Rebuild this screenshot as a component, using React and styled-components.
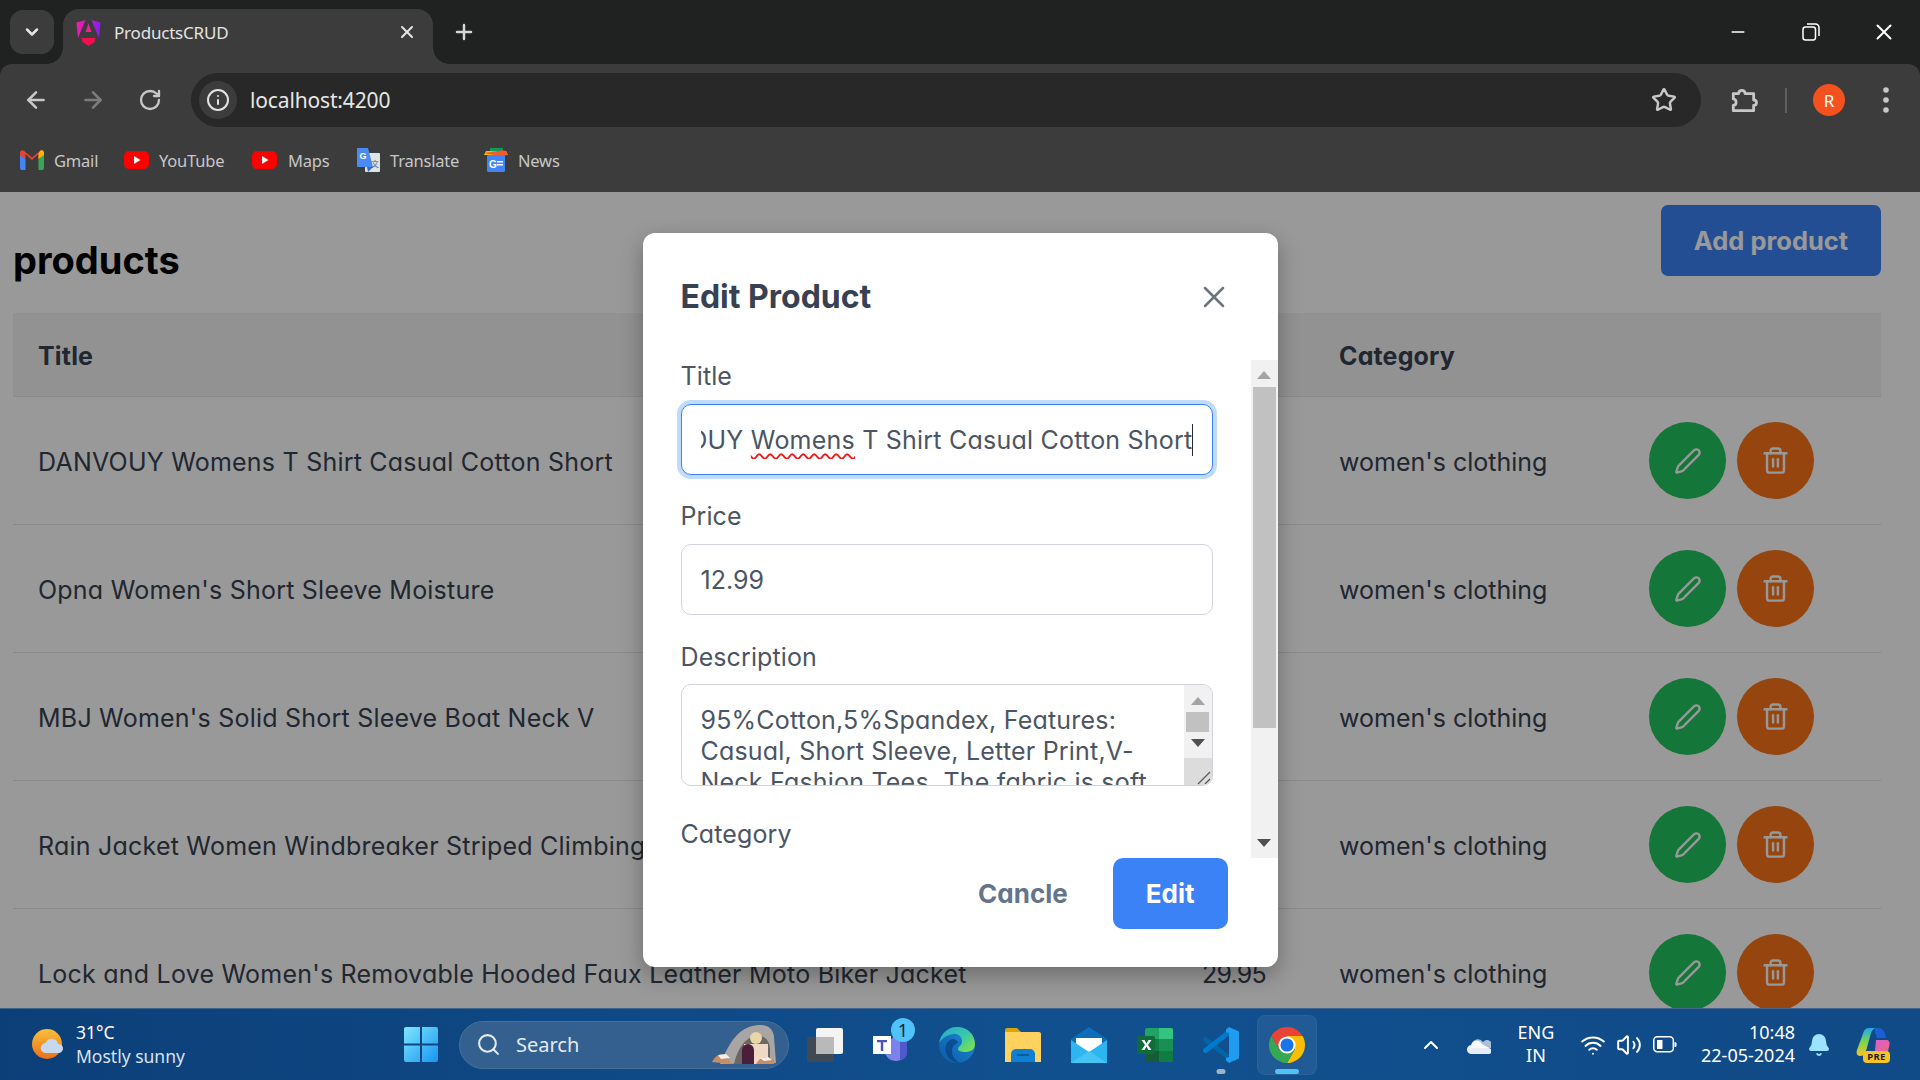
import React from "react";
import styled, { createGlobalStyle } from "styled-components";
import { ChevronDown, ChevronUp, X, Plus, ArrowLeft, ArrowRight, RotateCw, Info, Star, Minus, Pen, Trash2, Search as SearchGlyph, Wifi, Volume2, Bell } from "lucide-react";

const Global = createGlobalStyle`
  html, body { margin: 0; padding: 0; height: 100%; overflow: hidden; }
  #root { height: 100%; }
  * { box-sizing: border-box; }
  body { font-family: Inter, "Liberation Sans", sans-serif; font-feature-settings: "cv11"; }
`;

const Shell = styled.div`display:flex;flex-direction:column;width:1920px;height:1080px;overflow:hidden;background:#202221;`;

/* ---------- browser chrome ---------- */
const TabStrip = styled.div`display:flex;align-items:flex-start;height:64px;padding:9px 0 0 10px;flex:none;font-family:"Noto Sans",sans-serif;`;
const TabMenu = styled.div`width:44px;height:44px;margin-top:1px;border-radius:13px;background:#3c3c3c;color:#e3e3e3;display:flex;align-items:center;justify-content:center;`;
const Tab = styled.div`
  position:relative;width:370px;height:55px;margin-left:9px;background:#3c3c3c;border-radius:16px 16px 0 0;display:flex;align-items:center;padding:0 16px 9px 13px;color:#e3e3e3;font-size:17px;
  &::before,&::after{content:"";position:absolute;bottom:0;width:16px;height:16px;}
  &::before{left:-16px;background:radial-gradient(circle at 0 0,transparent 15.5px,#3c3c3c 16px);}
  &::after{right:-16px;background:radial-gradient(circle at 100% 0,transparent 15.5px,#3c3c3c 16px);}
`;
const TabTitle = styled.span`margin-left:13px;flex:1;letter-spacing:-.2px;`;
const NewTab = styled.div`width:40px;height:40px;margin:3px 0 0 11px;color:#d5d5d5;display:flex;align-items:center;justify-content:center;`;
const WindowControls = styled.div`margin-left:auto;display:flex;color:#fff;`;
const WinBtn = styled.div`width:73px;height:46px;display:flex;align-items:center;justify-content:center;`;
const Toolbar = styled.div`flex:none;height:72px;background:#3c3c3c;border-radius:12px 12px 0 0;display:flex;align-items:center;padding:0 24px 0 7px;color:#c8c8c8;font-family:"Noto Sans",sans-serif;`;
const NavBtn = styled.div`width:57px;display:flex;justify-content:center;color:${p=>p.$dim?"#7c7c7c":"#c8c8c8"};`;
const Omnibox = styled.div`flex:none;width:1510px;height:54px;margin-left:13px;border-radius:27px;background:#282828;display:flex;align-items:center;padding:0 24px 0 8px;`;
const SiteInfo = styled.div`width:38px;height:38px;border-radius:50%;background:#3c3c3c;color:#e3e3e3;display:flex;align-items:center;justify-content:center;`;
const Url = styled.span`margin-left:13px;font-size:21px;color:#e6e6e6;flex:1;letter-spacing:-.15px;`;
const ExtSlot = styled.div`margin-left:25px;width:36px;display:flex;justify-content:center;`;
const VDivider = styled.div`margin-left:23px;width:2px;height:25px;background:#5e5e5e;`;
const Avatar = styled.div`margin-left:26px;width:32px;height:32px;border-radius:50%;background:#f4511e;color:#fff;font:400 17px "Noto Sans",sans-serif;display:flex;align-items:center;justify-content:center;`;
const DotsSlot = styled.div`margin-left:31px;width:20px;display:flex;justify-content:center;`;
const BookmarkBar = styled.div`flex:none;height:56px;background:#3c3c3c;padding:0 0 8px 20px;display:flex;align-items:center;font-family:"Noto Sans",sans-serif;`;
const Bookmark = styled.div`display:flex;align-items:center;width:${p=>p.$w}px;color:#c7c7c7;font-size:16.5px;letter-spacing:-.2px;svg{flex:none;margin-right:${p=>p.$gap||10}px;}`;

/* ---------- page ---------- */
const Page = styled.main`flex:1;min-height:0;position:relative;overflow:hidden;background:#fff;padding:0 39px 0 13px;`;
const PageHead = styled.header`height:121px;padding-top:13px;display:flex;justify-content:space-between;align-items:flex-start;`;
const Heading = styled.h1`margin:34px 0 0;font-size:38px;line-height:42px;font-weight:700;color:#000;`;
const AddBtn = styled.button`width:220px;height:71px;border:0;border-radius:7px;background:#3b82f6;color:#fff;font:700 25.5px Inter,sans-serif;font-feature-settings:normal;`;
const TableRow = styled.div`display:grid;grid-template-columns:1165px 136px 310px 1fr;align-items:center;height:${p=>p.$head?84:128}px;background:${p=>p.$head?"#f3f4f6":"#fff"};border-bottom:1px solid #e5e7eb;font-size:25px;font-weight:${p=>p.$head?700:400};letter-spacing:${p=>p.$head?".15px":"0"};color:#374151;`;
const Cell = styled.div`padding:2px 0 0 25px;white-space:nowrap;`;
const TitleCell = styled(Cell)`letter-spacing:.22px;`;
const PriceCell = styled(Cell)`letter-spacing:-.8px;padding-left:24px;`;
const Actions = styled.div`padding-left:25px;display:flex;gap:11px;`;
const RoundBtn = styled.button`width:77px;height:77px;border:0;border-radius:50%;background:${p=>p.$kind==="edit"?"#22c55e":"#f97316"};color:#fff;display:flex;align-items:center;justify-content:center;padding:0;`;

/* ---------- modal ---------- */
const Overlay = styled.div`position:absolute;inset:0;background:rgba(0,0,0,.4);display:flex;align-items:center;justify-content:center;`;
const Modal = styled.div`width:635px;height:734px;background:#fff;border-radius:12px;box-shadow:0 8px 22px rgba(0,0,0,.3);display:flex;flex-direction:column;overflow:hidden;`;
const ModalHead = styled.div`flex:none;height:127px;padding:0 46px 0 38px;display:flex;align-items:center;justify-content:space-between;color:#6b7280;`;
const ModalTitle = styled.h2`margin:0;font-size:32px;font-weight:700;color:#374151;`;
const ScrollArea = styled.div`flex:none;height:498px;display:flex;`;
const Form = styled.form`flex:1;overflow:hidden;padding-left:38px;`;
const Field = styled.div`margin-bottom:${p=>p.$mb||25}px;width:532px;`;
const Label = styled.label`display:block;height:32px;line-height:32px;margin-bottom:${p=>p.$mb||12}px;font-size:25px;letter-spacing:.1px;color:#4b5563;`;
const TextInput = styled.input`display:block;width:532px;height:71px;border:1px solid #d1d5db;border-radius:10px;padding:0 19px;font:400 25px Inter,sans-serif;font-feature-settings:"cv11";color:#4b5563;outline:0;background:#fff;`;
const FocusedInput = styled.div`width:532px;height:71px;border:1px solid #3b82f6;border-radius:10px;box-shadow:0 0 0 4px #bfdbfe;padding:0 19px;display:flex;align-items:center;font-size:25px;letter-spacing:.22px;color:#4b5563;background:#fff;`;
const InputClip = styled.div`width:100%;overflow:hidden;display:flex;justify-content:flex-end;white-space:nowrap;height:38px;line-height:38px;`;
const Misspelt = styled.span`text-decoration:underline wavy #ee1c1c 1.5px;text-underline-offset:4px;text-decoration-skip-ink:none;`;
const Caret = styled.span`flex:none;width:1px;height:32px;margin:3px 0 0 -1px;background:#1f2937;`;
const TextBox = styled.div`width:532px;height:102px;border:1px solid #d1d5db;border-radius:10px;overflow:hidden;display:flex;background:#fff;`;
const TextArea = styled.textarea`flex:1;border:0;outline:0;resize:none;overflow:hidden;padding:20px 0 0 19px;font:400 25px/31px Inter,sans-serif;letter-spacing:.2px;font-feature-settings:"cv11";color:#4b5563;background:transparent;`;
const InnerBar = styled.div`flex:none;width:28px;display:flex;flex-direction:column;`;
const InnerTrack = styled.div`height:73px;background:#f1f1f1;display:flex;flex-direction:column;align-items:center;position:relative;`;
const InnerThumb = styled.div`position:absolute;top:27px;left:2px;width:23px;height:20px;background:#c1c1c1;`;
const Arrow = styled.i`display:block;width:0;height:0;border-left:7px solid transparent;border-right:7px solid transparent;${p=>p.$up?`border-bottom:8px solid ${p.$c};`:`border-top:8px solid ${p.$c};`}`;
const Resizer = styled.div`flex:1;background:#dcdcdc;display:flex;align-items:flex-end;justify-content:flex-end;`;
const MainTrack = styled.div`flex:none;width:27px;background:#f1f1f1;position:relative;display:flex;flex-direction:column;align-items:center;justify-content:space-between;padding:11px 0 11px;`;
const MainThumb = styled.div`position:absolute;top:27px;left:2px;width:23px;height:341px;background:#c1c1c1;`;
const ModalFoot = styled.div`flex:1;display:flex;justify-content:flex-end;align-items:flex-start;gap:12px;padding-right:50px;`;
const FootBtn = styled.button`height:71px;padding:0 33px;border:0;border-radius:10px;background:${p=>p.$primary?"#3b82f6":"transparent"};color:${p=>p.$primary?"#fff":"#64748b"};font:700 26px Inter,sans-serif;font-feature-settings:"cv11";`;

/* ---------- taskbar ---------- */
const Taskbar = styled.footer`flex:none;height:72px;border-top:1px solid #41648d;background:linear-gradient(90deg,#0c3f78,#11508f 55%,#104a87);display:grid;grid-template-columns:388px auto 1fr;align-items:center;color:#fff;font-family:"Noto Sans",sans-serif;`;
const Weather = styled.div`display:flex;align-items:center;padding-left:32px;`;
const WeatherText = styled.div`margin-left:12px;font-size:17.5px;line-height:24px;margin-top:-2px;small{display:block;font-size:17.5px;color:#d9e3ef;}`;
const TaskIcons = styled.div`display:flex;align-items:center;`;
const Slot = styled.div`position:relative;width:66px;height:60px;display:flex;align-items:center;justify-content:center;border-radius:8px;${p=>p.$active&&"background:rgba(255,255,255,.07);box-shadow:inset 0 0 0 1px rgba(255,255,255,.05);width:60px;margin:0 3px;"}`;
const Pip = styled.i`position:absolute;bottom:1px;left:50%;transform:translateX(-50%);height:5px;border-radius:3px;width:${p=>p.$w}px;background:${p=>p.$c};`;
const TeamsBadge = styled.span`position:absolute;right:9px;top:3px;width:24px;height:24px;border-radius:50%;background:#4fc3f7;color:#10233b;font-size:18px;display:flex;align-items:center;justify-content:center;`;
const SearchBox = styled.div`width:330px;height:48px;margin:0 3px 0 5px;border-radius:24px;background:#33608f;border:1px solid #47719c;display:flex;align-items:center;padding:0 10px 0 16px;color:#e4eaf1;font-size:20px;span{margin-left:15px;flex:1;}`;
const Tray = styled.div`display:flex;align-items:center;justify-content:flex-end;padding-right:30px;`;
const TrayItem = styled.div`width:${p=>p.$w}px;margin-left:${p=>p.$ml||0}px;display:flex;justify-content:center;`;
const Stack = styled.div`text-align:${p=>p.$align};font-size:18px;line-height:23px;margin-top:-2px;white-space:nowrap;margin-left:${p=>p.$ml||0}px;width:${p=>p.$w}px;`;
const CopilotWrap = styled.div`position:relative;width:34px;height:34px;margin-left:20px;`;
const PreBadge = styled.span`position:absolute;left:7px;bottom:-1px;width:27px;height:12px;border-radius:4px;background:#f7c325;color:#222;font:700 9.5px/12px "Noto Sans",sans-serif;text-align:center;letter-spacing:.4px;`;

/* ---------- drawings ---------- */
const AngularIcon = () => (
  <svg width="25" height="27" viewBox="0 0 25 27">
    <defs><linearGradient id="ng" x1="0" y1="0" x2="1" y2="0"><stop offset="0" stopColor="#f01fa8"/><stop offset="1" stopColor="#8a1cf0"/></linearGradient></defs>
    <path d="M9.5 1 0.5 3.5 2 19 9.5 1Z M15.5 1 24.5 3.5 23 19 15.5 1Z" fill="url(#ng)"/>
    <path d="M12.5 4.5 15.5 13H9.5Z" fill="#f02090"/>
    <path d="M5.5 19H19.5L18.5 23 12.5 27 6.5 23Z" fill="#f0104f"/>
  </svg>
);
const GmailIcon = () => (
  <svg width="24" height="20" viewBox="0 0 24 20">
    <path d="M0 4v14a2 2 0 0 0 2 2h3.5V9Z" fill="#4285f4"/><path d="M24 4v14a2 2 0 0 1-2 2h-3.5V9Z" fill="#34a853"/>
    <path d="M0 2.5C0 .5 2.3-.6 3.8.7L12 7.5 20.200.7C21.700-.6 24 .5 24 2.500V5l-5.500 4V4L12 10 5.500 4v5L0 5Z" fill="#ea4335"/>
    <path d="M18.500 4v5L24 5V2.500C24 .5 21.700-.6 20.200.7Z" fill="#fbbc04"/>
  </svg>
);
const YtIcon = () => (
  <svg width="25" height="18" viewBox="0 0 25 18"><rect width="25" height="18" rx="5" fill="#f00"/><path d="M10 5v8l6.500-4Z" fill="#fff"/></svg>
);
const TranslateIcon = () => (
  <svg width="24" height="24" viewBox="0 0 24 24">
    <rect x="9" y="5" width="15" height="19" rx="1" fill="#dde3e8"/>
    <path d="M1 0h11l5 19H2a1 1 0 0 1-1-1Z" fill="#4a8af4"/>
    <path d="M11 19h6l-5 5Z" fill="#3367c7"/>
    <text x="3.500" y="11" fontSize="9" fontWeight="700" fill="#fff" fontFamily="Liberation Sans">G</text>
    <text x="15" y="19" fontSize="8" fill="#5f6368" fontFamily="Noto Sans CJK SC">文</text>
  </svg>
);
const NewsIcon = () => (
  <svg width="24" height="24" viewBox="0 0 24 24">
    <path d="M6 0h13v6H6Z" fill="#0c9d58"/><path d="M2 3h20l2 4H0Z" fill="#fbbc04"/><path d="M0 5l20-3 4 4-4 3Z" fill="#ea4335" opacity=".8"/>
    <rect x="3" y="7" width="18" height="17" rx="1.500" fill="#4285f4"/>
    <text x="5" y="19.500" fontSize="10" fontWeight="700" fill="#fff" fontFamily="Liberation Sans">G</text>
    <path d="M13 13h6v1.500h-6Zm0 3h6v1.500h-6Z" fill="#fff"/>
  </svg>
);
const RestoreIcon = () => (
  <svg width="18" height="18" viewBox="0 0 18 18" fill="none" stroke="#fff" strokeWidth="1.500"><rect x="1" y="4" width="12.500" height="13" rx="2.500"/><path d="M5 1h8.500A3.500 3.500 0 0 1 17 4.500V13"/></svg>
);
const PuzzleIcon = () => (
  <svg width="30" height="30" viewBox="0 0 28 28" fill="none" stroke="#c8c8c8" strokeWidth="2.600" strokeLinejoin="round">
    <path d="M3 9h5c0-4 6-4 6 0h8v6c3.500 0 3.500 5 0 5v5H3v-5c3.500 0 3.500-6 0-6Z" transform="translate(1 -1)"/>
  </svg>
);
const MenuDots = () => (
  <svg width="8" height="28" viewBox="0 0 8 28" fill="#c8c8c8"><circle cx="4" cy="4" r="2.800"/><circle cx="4" cy="14" r="2.800"/><circle cx="4" cy="24" r="2.800"/></svg>
);
const WeatherIcon = () => (
  <svg width="32" height="32" viewBox="0 0 32 32">
    <defs><linearGradient id="sun" x1="0" y1="0" x2="0" y2="1"><stop offset="0" stopColor="#fbbf3a"/><stop offset="1" stopColor="#ec6f1a"/></linearGradient></defs>
    <circle cx="15" cy="15" r="15" fill="url(#sun)"/>
    <path d="M14 24a5 5 0 0 1-.5-10 6.500 6.500 0 0 1 12.500 1 4.500 4.500 0 0 1 1 9Z" fill="#c6d9ee"/>
  </svg>
);
const WinLogo = () => (
  <svg width="34" height="35" viewBox="0 0 34 35">
    <defs><linearGradient id="wn" x1="0" y1="0" x2="1" y2="1"><stop offset="0" stopColor="#7fe6fb"/><stop offset="1" stopColor="#1696f3"/></linearGradient></defs>
    <path d="M0 2a2 2 0 0 1 2-2h14v16.500H0ZM18 0h14a2 2 0 0 1 2 2v14.500H18ZM0 18.500h16V35H2a2 2 0 0 1-2-2ZM18 18.500h16V33a2 2 0 0 1-2 2H18Z" fill="url(#wn)"/>
  </svg>
);
const CaveIcon = () => (
  <svg width="66" height="42" viewBox="0 0 66 42">
    <path d="M8 40C18 18 26 2 48 1c8 0 13 4 14 12l2 26Z" fill="#a9a5a5"/>
    <path d="M22 40c3-14 12-30 26-28 7 1 10 7 10 14v14Z" fill="#6b6763"/>
    <rect x="32" y="20" width="24" height="20" fill="#f0d9c4"/>
    <path d="M30 40V26a6 6 0 0 1 12 0v14Z" fill="#4b1f3a"/>
    <circle cx="44" cy="14" r="6" fill="#e8d7a8"/>
    <path d="M0 38c4-8 10-9 14-6l6 8Z M44 40c4-8 12-8 18-4v4Z" fill="#c88d62"/>
    <path d="M6 31l8-1 4 4-9 1ZM48 34l8-1 4 3-8 1Z" fill="#f4efe9"/>
  </svg>
);
const TaskViewIcon = () => (
  <svg width="36" height="34" viewBox="0 0 36 34">
    <rect x="9" width="27" height="26" rx="2" fill="#f4f4f4"/>
    <rect y="9" width="27" height="25" rx="2" fill="#4a4a4a" opacity=".85"/>
    <rect x="9" y="9" width="18" height="17" fill="#b9b9b9"/>
  </svg>
);
const TeamsIcon = () => (
  <svg width="36" height="36" viewBox="0 0 36 36">
    <circle cx="25" cy="13" r="6" fill="#7b83eb"/>
    <path d="M12 12h22v12a10 10 0 0 1-10 10h-2a10 10 0 0 1-10-10Z" fill="#7b83eb"/>
    <path d="M27 14h7v12a7 7 0 0 1-7 7Z" fill="#5059c9"/>
    <rect y="9" width="18" height="18" fill="#fff"/>
    <path d="M4 13h10v2.200h-3.800V24H7.800v-8.800H4Z" fill="#4b53bc"/>
  </svg>
);
const EdgeIcon = () => (
  <svg width="36" height="36" viewBox="0 0 36 36">
    <defs>
      <linearGradient id="eg1" x1="0" y1="1" x2="1" y2="0"><stop offset="0" stopColor="#0c59a4"/><stop offset="1" stopColor="#1c8fdc"/></linearGradient>
      <linearGradient id="eg2" x1="0" y1="0" x2="1" y2=".8"><stop offset="0" stopColor="#2aa7d8"/><stop offset=".6" stopColor="#38c8a8"/><stop offset="1" stopColor="#7ee04f"/></linearGradient>
    </defs>
    <circle cx="18" cy="18" r="18" fill="url(#eg1)"/>
    <path d="M0 16C2 6 10 0 18 0c10 0 18 7 18 17 0 6-5 8-10 8-4 0-7-1-7-3 0-3 4-3 4-8 0-5-5-8-9-7C8 8 3 11 0 16Z" fill="url(#eg2)"/>
    <path d="M14 12c-6 1-9 7-7 14 2 6 8 10 14 10-4-2-8-6-8-12 0-5 3-7 6-8-1-3-3-4-5-4Z" fill="#0a3f7e" opacity=".7"/>
  </svg>
);
const FolderIcon = () => (
  <svg width="36" height="34" viewBox="0 0 36 34">
    <path d="M0 2a2 2 0 0 1 2-2h10l4 4H0Z" fill="#dba40c"/>
    <path d="M0 4h34a2 2 0 0 1 2 2v28H0Z" fill="#ffd25f"/>
    <path d="M6 34V26a5 5 0 0 1 5-5h14a5 5 0 0 1 5 5v8Z" fill="#0f7fd1"/>
    <rect x="12" y="26" width="12" height="2" fill="#0a5a9c"/>
  </svg>
);
const MailIcon = () => (
  <svg width="36" height="36" viewBox="0 0 36 36">
    <path d="M0 12 18 0l18 12v24H0Z" fill="#0f6cbd"/>
    <path d="M5 11h26v8L18 26 5 19Z" fill="#fff"/>
    <path d="M0 13l18 12 18-12v23H0Z" fill="#2db5f0"/>
    <path d="M0 36 18 24l18 12Z" fill="#55d0f8" opacity=".6"/>
  </svg>
);
const ExcelIcon = () => (
  <svg width="36" height="34" viewBox="0 0 36 34">
    <path d="M8 2a2 2 0 0 1 2-2h24a2 2 0 0 1 2 2v9H8Z" fill="#21a366"/><path d="M22 0h12a2 2 0 0 1 2 2v9H22Z" fill="#33c481"/>
    <path d="M8 11h14v12H8Z" fill="#107c41"/><path d="M22 11h14v12H22Z" fill="#1a8f55"/>
    <path d="M8 23h28v9a2 2 0 0 1-2 2H10a2 2 0 0 1-2-2Z" fill="#185c37"/><rect x="22" y="23" width="14" height="11" fill="#107c41"/>
    <rect y="8" width="18" height="18" rx="1.500" fill="#0f6b3a"/>
    <path d="M4.500 12h3l2 3.500L11.500 12h3l-3.500 5 3.500 5h-3l-2-3.500L7.500 22h-3L8 17Z" fill="#fff"/>
  </svg>
);
const VsCodeIcon = () => (
  <svg width="36" height="36" viewBox="0 0 36 36">
    <path d="M2.500 12.500 25 30" stroke="#0065a9" strokeWidth="5" strokeLinecap="round"/>
    <path d="M2.500 23.500 25 6" stroke="#007acc" strokeWidth="5" strokeLinecap="round"/>
    <path d="M26 0l10 4.500v27L26 36l-3-2.500V31l3-1V6l-3-1V2.500Z" fill="#1f9cf0"/>
  </svg>
);
const ChromeIcon = () => (
  <svg width="36" height="36" viewBox="2 2 44 44">
    <path d="M4.950 13A22 22 0 0 1 43.050 13H24L14.500 29.500Z" fill="#ea4335"/>
    <path d="M43.050 13A22 22 0 0 1 24 46L33.500 29.500 24 13Z" fill="#fbbc04"/>
    <path d="M24 46A22 22 0 0 1 4.950 13L14.500 29.500H33.500Z" fill="#34a853"/>
    <circle cx="24" cy="24" r="10.500" fill="#fff"/><circle cx="24" cy="24" r="8" fill="#1a73e8"/>
  </svg>
);
const CloudIcon = () => (
  <svg width="24" height="18" viewBox="0 0 24 18">
    <path d="M5 9a6 6 0 0 1 11-3 5 5 0 0 1 8 6H3Z" fill="#a9c0da"/>
    <path d="M5 18a4.500 4.500 0 0 1-1-9 6 6 0 0 1 11-1l9 5a3 3 0 0 1-2 5Z" fill="#fff" opacity=".9"/>
  </svg>
);
const BatteryIcon = () => (
  <svg width="24" height="18" viewBox="0 0 24 18" fill="none">
    <rect x=".8" y=".8" width="19.500" height="15" rx="3.500" stroke="#fff" strokeWidth="1.500"/>
    <rect x="4" y="4" width="5.500" height="9" fill="#fff"/>
    <path d="M21.500 6h.5a1.500 1.500 0 0 1 1.500 1.500v2a1.500 1.500 0 0 1-1.500 1.500h-.5Z" fill="#fff"/>
  </svg>
);
const CopilotIcon = () => (
  <svg width="34" height="34" viewBox="0 0 34 34">
    <defs>
      <linearGradient id="cp1" x1="0" y1="0" x2="0" y2="1"><stop offset="0" stopColor="#1fa8f1"/><stop offset=".5" stopColor="#7dd34f"/><stop offset="1" stopColor="#f3c623"/></linearGradient>
      <linearGradient id="cp2" x1="0" y1="0" x2="1" y2="1"><stop offset="0" stopColor="#d35ee0"/><stop offset="1" stopColor="#f4696b"/></linearGradient>
    </defs>
    <path d="M8 3c1-2 3-3 5-3h8c-3 0-5 2-6 5l-5 18c-1 3-3 5-6 5-3 0-4-3-3-6Z" fill="url(#cp1)"/>
    <path d="M20 0h3c3 0 5 3 6 6l1 4H21l-2-6c-.4-1.500 0-3 1-4Z" fill="#1b5fd6"/>
    <path d="M20 12h10c3 0 4 2 3.500 5l-2 8c-.8 2-2 3-4 3H14c3 0 4-2 5-5Z" fill="url(#cp2)"/>
  </svg>
);
const Grip = () => (
  <svg width="16" height="16" viewBox="0 0 16 16" stroke="#555" strokeWidth="1.200"><path d="M2 15 14 3M9 15l5-5"/></svg>
);

const rows = [
  ["DANVOUY Womens T Shirt Casual Cotton Short", "12.99"],
  ["Opna Women's Short Sleeve Moisture", "7.95"],
  ["MBJ Women's Solid Short Sleeve Boat Neck V", "9.85"],
  ["Rain Jacket Women Windbreaker Striped Climbing Raincoats", "39.99"],
  ["Lock and Love Women's Removable Hooded Faux Leather Moto Biker Jacket", "29.95"],
];
const description = "95%Cotton,5%Spandex, Features: Casual, Short Sleeve, Letter Print,V-Neck Fashion Tees, The fabric is soft and has some stretch.";

export default function App() {
  return (
    <Shell>
      <Global />
      <TabStrip>
        <TabMenu><ChevronDown size={20} strokeWidth={3} /></TabMenu>
        <Tab>
          <AngularIcon />
          <TabTitle>ProductsCRUD</TabTitle>
          <X size={20} strokeWidth={2.5} />
        </Tab>
        <NewTab><Plus size={24} strokeWidth={2.500} /></NewTab>
        <WindowControls>
          <WinBtn><Minus size={20} strokeWidth={1.800} /></WinBtn>
          <WinBtn><RestoreIcon /></WinBtn>
          <WinBtn><X size={26} strokeWidth={1.800} /></WinBtn>
        </WindowControls>
      </TabStrip>
      <Toolbar>
        <NavBtn><ArrowLeft size={26} strokeWidth={2.300} /></NavBtn>
        <NavBtn $dim><ArrowRight size={26} strokeWidth={2.300} /></NavBtn>
        <NavBtn><RotateCw size={24} strokeWidth={2.300} /></NavBtn>
        <Omnibox>
          <SiteInfo><Info size={24} strokeWidth={2} /></SiteInfo>
          <Url>localhost:4200</Url>
          <Star size={26} strokeWidth={2.300} />
        </Omnibox>
        <ExtSlot><PuzzleIcon /></ExtSlot>
        <VDivider />
        <Avatar>R</Avatar>
        <DotsSlot><MenuDots /></DotsSlot>
      </Toolbar>
      <BookmarkBar>
        <Bookmark $w={104}><GmailIcon />Gmail</Bookmark>
        <Bookmark $w={128}><YtIcon />YouTube</Bookmark>
        <Bookmark $w={104} $gap={11}><YtIcon />Maps</Bookmark>
        <Bookmark $w={128}><TranslateIcon />Translate</Bookmark>
        <Bookmark $w={90}><NewsIcon />News</Bookmark>
      </BookmarkBar>

      <Page>
        <PageHead>
          <Heading>products</Heading>
          <AddBtn>Add product</AddBtn>
        </PageHead>
        <TableRow $head>
          <Cell>Title</Cell>
          <Cell>Price</Cell>
          <Cell>Category</Cell>
          <Cell />
        </TableRow>
        {rows.map(([title, price]) => (
          <TableRow key={title}>
            <TitleCell>{title}</TitleCell>
            <PriceCell>{price}</PriceCell>
            <Cell>women's clothing</Cell>
            <Actions>
              <RoundBtn $kind="edit"><Pen size={28} strokeWidth={2} /></RoundBtn>
              <RoundBtn $kind="delete"><Trash2 size={29} strokeWidth={2} /></RoundBtn>
            </Actions>
          </TableRow>
        ))}
        <Overlay>
          <Modal>
            <ModalHead>
              <ModalTitle>Edit Product</ModalTitle>
              <X size={36} strokeWidth={1.700} />
            </ModalHead>
            <ScrollArea>
              <Form>
                <Field>
                  <Label>Title</Label>
                  <FocusedInput>
                    <InputClip>
                      <span>DANVOUY <Misspelt>Womens</Misspelt> T Shirt Casual Cotton Short</span>
                      <Caret />
                    </InputClip>
                  </FocusedInput>
                </Field>
                <Field $mb={26}>
                  <Label>Price</Label>
                  <TextInput readOnly value="12.99" />
                </Field>
                <Field $mb={32}>
                  <Label $mb={11}>Description</Label>
                  <TextBox>
                    <TextArea readOnly value={description} />
                    <InnerBar>
                      <InnerTrack>
                        <Arrow $up $c="#a3a3a3" style={{ marginTop: 12 }} />
                        <InnerThumb />
                        <Arrow $c="#505050" style={{ marginTop: 34 }} />
                      </InnerTrack>
                      <Resizer><Grip /></Resizer>
                    </InnerBar>
                  </TextBox>
                </Field>
                <Field>
                  <Label>Category</Label>
                  <TextInput readOnly value="women's clothing" />
                </Field>
              </Form>
              <MainTrack>
                <Arrow $up $c="#a3a3a3" />
                <MainThumb />
                <Arrow $c="#505050" />
              </MainTrack>
            </ScrollArea>
            <ModalFoot>
              <FootBtn type="button">Cancle</FootBtn>
              <FootBtn type="button" $primary>Edit</FootBtn>
            </ModalFoot>
          </Modal>
        </Overlay>
      </Page>

      <Taskbar>
        <Weather>
          <WeatherIcon />
          <WeatherText>31°C<small>Mostly sunny</small></WeatherText>
        </Weather>
        <TaskIcons>
          <Slot><WinLogo /></Slot>
          <SearchBox>
            <SearchGlyph size={25} strokeWidth={2} />
            <span>Search</span>
            <CaveIcon />
          </SearchBox>
          <Slot><TaskViewIcon /></Slot>
          <Slot><TeamsIcon /><TeamsBadge>1</TeamsBadge></Slot>
          <Slot><EdgeIcon /></Slot>
          <Slot><FolderIcon /></Slot>
          <Slot><MailIcon /></Slot>
          <Slot><ExcelIcon /></Slot>
          <Slot><VsCodeIcon /><Pip $w={9} $c="#9fb3c8" /></Slot>
          <Slot $active><ChromeIcon /><Pip $w={24} $c="#4fc3f7" /></Slot>
        </TaskIcons>
        <Tray>
          <TrayItem $w={34}><ChevronUp size={24} strokeWidth={2} /></TrayItem>
          <TrayItem $w={62}><CloudIcon /></TrayItem>
          <Stack $align="center" $w={52}>ENG<br />IN</Stack>
          <TrayItem $w={36} $ml={13}><Wifi size={26} strokeWidth={1.800} /></TrayItem>
          <TrayItem $w={36}><Volume2 size={26} strokeWidth={1.800} /></TrayItem>
          <TrayItem $w={36}><BatteryIcon /></TrayItem>
          <Stack $align="right" $w={112}>10:48<br />22-05-2024</Stack>
          <TrayItem $w={34} $ml={7}><Bell size={24} fill="#9be3ff" color="#9be3ff" /></TrayItem>
          <CopilotWrap><CopilotIcon /><PreBadge>PRE</PreBadge></CopilotWrap>
        </Tray>
      </Taskbar>
    </Shell>
  );
}
